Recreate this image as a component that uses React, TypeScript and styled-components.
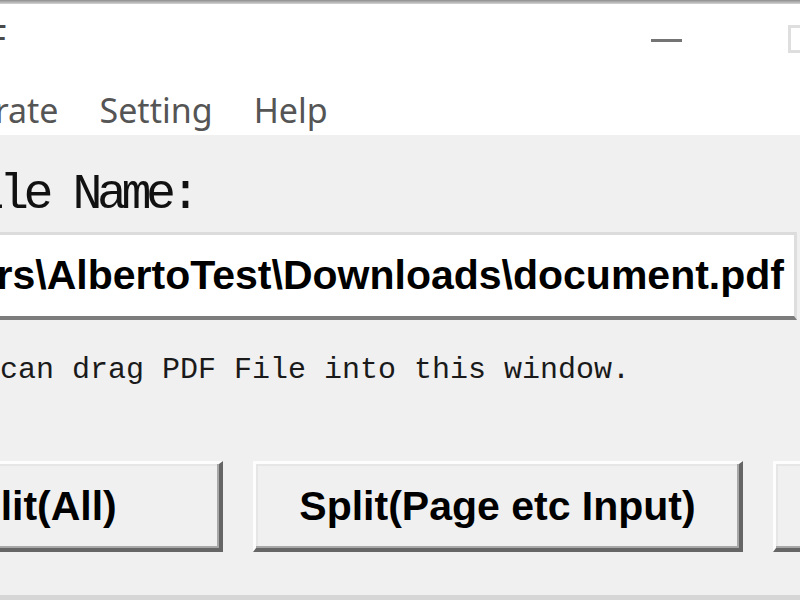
import React from "react";
import styled, { createGlobalStyle } from "styled-components";

const GlobalStyle = createGlobalStyle`
  html, body {
    margin: 0;
    padding: 0;
    width: 800px;
    height: 600px;
    overflow: hidden;
    background: #f0f0f0;
  }
`;

const Window = styled.div`
  width: 1030px;
  height: 600px;
  margin-left: -160px;
  display: flex;
  flex-direction: column;
  background: #f0f0f0;
`;

const TopEdge = styled.div`
  height: 4px;
  background: linear-gradient(#8e8e8e, #d4d4d4);
`;

const CaptionBar = styled.div`
  height: 80px;
  background: #fff;
  display: flex;
  align-items: flex-start;
`;

const Title = styled.div`
  margin: 14px 0 0 26px;
  font-family: "Noto Sans", "Liberation Sans", sans-serif;
  font-size: 36px;
  line-height: 40px;
  color: #4a4a4a;
  white-space: nowrap;
`;

const Spacer = styled.div`
  flex: 1;
`;

const CaptionButton = styled.div`
  width: 136px;
  height: 80px;
  display: flex;
  justify-content: center;
  padding-top: 21px;
  box-sizing: border-box;
`;

const MinGlyph = styled.span`
  width: 31px;
  height: 3px;
  margin-top: 14px;
  background: #747474;
`;

const MaxGlyph = styled.span`
  width: 28px;
  height: 28px;
  box-sizing: border-box;
  border: 3px solid #dedede;
`;

const MenuBar = styled.div`
  height: 51px;
  padding-left: 88px;
  background: #fff;
  display: flex;
  align-items: center;
  gap: 41px;
`;

const MenuItem = styled.span`
  font-family: "Noto Sans", "Liberation Sans", sans-serif;
  font-size: 34px;
  line-height: 34px;
  color: #555;
  white-space: nowrap;
`;

const Body = styled.div`
  flex: 1;
  display: flex;
  flex-direction: column;
  align-items: flex-start;
`;

const FieldLabel = styled.div`
  margin: 35px 0 0 110px;
  font-family: "Liberation Mono", "DejaVu Sans Mono", monospace;
  font-size: 50px;
  line-height: 50px;
  letter-spacing: -5.5px;
  color: #111;
  white-space: nowrap;
`;

const PathField = styled.div`
  margin: 12px 0 0 3px;
  width: 954px;
  height: 88px;
  box-sizing: border-box;
  background: #fff;
  border-top: 3px solid #dcdcdc;
  border-right: 3px solid #dedede;
  border-bottom: 4px solid #7c7c7c;
  display: flex;
  align-items: center;
  justify-content: flex-end;
  padding-right: 10px;
  overflow: hidden;
`;

const PathText = styled.span`
  font-family: "Liberation Sans", Arial, sans-serif;
  font-weight: bold;
  font-size: 41px;
  line-height: 41px;
  color: #000;
  white-space: nowrap;
`;

const Hint = styled.div`
  margin: 35px 0 0 88px;
  font-family: "Liberation Mono", "DejaVu Sans Mono", monospace;
  font-size: 30px;
  line-height: 30px;
  color: #1a1a1a;
  white-space: nowrap;
`;

const ButtonRow = styled.div`
  margin: 76px 0 0 3px;
  display: flex;
  gap: 30px;
`;

const ActionButton = styled.button<{ $width: number }>`
  flex: none;
  width: ${(p) => p.$width}px;
  height: 91px;
  box-sizing: border-box;
  background: #f0f0f0;
  border-style: solid;
  border-width: 3px 4px 4px 3px;
  border-color: #fdfdfd #666 #666 #fdfdfd;
  box-shadow: inset -2px -2px 0 #a8a8a8, inset 2px 2px 0 #e6e6e6;
  font-family: "Liberation Sans", Arial, sans-serif;
  font-weight: bold;
  font-size: 41px;
  color: #000;
  padding: 0;
  display: flex;
  align-items: center;
  justify-content: center;
  white-space: nowrap;
`;

const BottomEdge = styled.div`
  margin-top: auto;
  height: 5px;
  background: #d6d6d6;
  align-self: stretch;
`;

const App: React.FC = () => {
  return (
    <>
      <GlobalStyle />
      <Window>
        <TopEdge />
        <CaptionBar>
          <Title>SplitPDF</Title>
          <Spacer />
          <CaptionButton>
            <MinGlyph />
          </CaptionButton>
          <CaptionButton>
            <MaxGlyph />
          </CaptionButton>
        </CaptionBar>
        <MenuBar>
          <MenuItem>Operate</MenuItem>
          <MenuItem>Setting</MenuItem>
          <MenuItem>Help</MenuItem>
        </MenuBar>
        <Body>
          <FieldLabel>File Name:</FieldLabel>
          <PathField>
            <PathText>C:\Users\AlbertoTest\Downloads\document.pdf</PathText>
          </PathField>
          <Hint>You can drag PDF File into this window.</Hint>
          <ButtonRow>
            <ActionButton $width={380}>Split(All)</ActionButton>
            <ActionButton $width={490}>Split(Page etc Input)</ActionButton>
            <ActionButton $width={380}>Merge</ActionButton>
          </ButtonRow>
          <BottomEdge />
        </Body>
      </Window>
    </>
  );
};

export default App;
